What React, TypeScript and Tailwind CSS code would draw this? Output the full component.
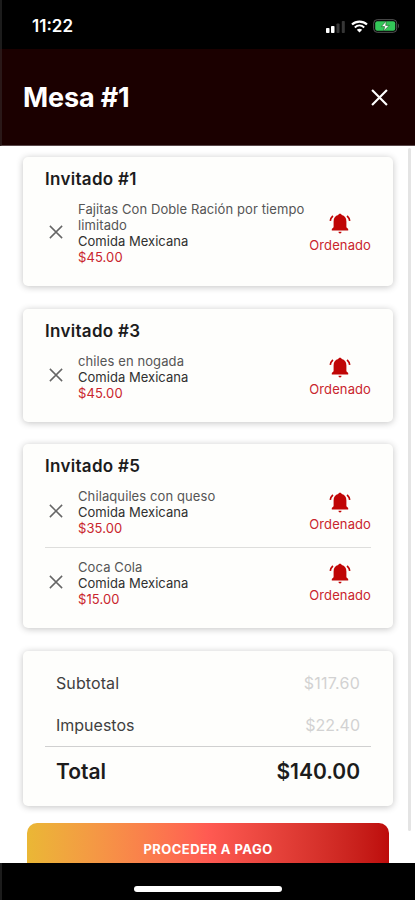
import clsx from "clsx";

type Item = {
  name: string;
  category: string;
  price: string;
};

type Guest = {
  id: number;
  items: Item[];
};

const guests: Guest[] = [
  {
    id: 1,
    items: [
      {
        name: "Fajitas Con Doble Ración por tiempo limitado",
        category: "Comida Mexicana",
        price: "$45.00",
      },
    ],
  },
  {
    id: 3,
    items: [
      { name: "chiles en nogada", category: "Comida Mexicana", price: "$45.00" },
    ],
  },
  {
    id: 5,
    items: [
      { name: "Chilaquiles con queso", category: "Comida Mexicana", price: "$35.00" },
      { name: "Coca Cola", category: "Comida Mexicana", price: "$15.00" },
    ],
  },
];

const cardClass =
  "rounded-[5px] bg-[#fefefc] shadow-[0_1px_7px_rgba(0,0,0,0.24)]";

function CloseIcon({ className }: { className?: string }) {
  return (
    <svg viewBox="0 0 16 16" fill="none" stroke="currentColor" className={className}>
      <path d="M1 1L15 15M15 1L1 15" />
    </svg>
  );
}

function BellIcon() {
  return (
    <svg viewBox="0 0 22 22" className="h-[22px] w-[22px]" fill="#c00505">
      <path d="M11 .8c-.9 0-1.500.5-1.700 1.300C6.200 2.800 4.600 5.200 4.600 8.400V14.200L2.800 16v1.500h16.400V16l-1.800-1.800V8.400c0-3.200-1.600-5.600-4.700-6.300C12.500 1.300 11.900.8 11 .8z" />
      <path d="M9.500 18.800h3c0 1-.6 1.700-1.500 1.700s-1.500-.7-1.500-1.700z" />
      <path
        d="M3.900 2.800C2.400 4.200 1.600 5.800 1.300 7.800M18.100 2.800c1.500 1.400 2.300 3 2.600 5"
        fill="none"
        stroke="#c00505"
        strokeWidth="1.700"
      />
    </svg>
  );
}

function StatusBar() {
  return (
    <div className="flex h-[49px] shrink-0 items-center justify-between border-l-2 border-[#1c1c1c] bg-black pr-[15px] pl-[30px] pt-[3px] text-white">
      <span className="pt-0.5 text-[17px] font-semibold">11:22</span>
      <div className="flex items-center gap-[5px]">
        <svg viewBox="0 0 21 13" className="h-[13px] w-[21px]">
          <rect x="1" y="8" width="3.500" height="5" rx="0.800" fill="#fff" />
          <rect x="6" y="6" width="3.500" height="7" rx="0.800" fill="#fff" />
          <rect x="11.500" y="3.500" width="3" height="9.500" rx="0.800" fill="#363636" />
          <rect x="16.800" y="1" width="3" height="12" rx="0.800" fill="#363636" />
        </svg>
        <svg viewBox="0 0 17 13" className="h-[13px] w-[17px]" fill="none" stroke="#fff">
          <path d="M1 4.500C5.200.6 11.800.6 16 4.500" strokeWidth="2.200" />
          <path d="M3.800 7.400c2.700-2.400 6.700-2.400 9.400 0" strokeWidth="2" />
          <path d="M8.500 12.500L5.800 9.700c1.600-1.400 3.800-1.400 5.400 0z" fill="#fff" stroke="none" />
        </svg>
        <svg viewBox="0 0 27 14" className="h-[14px] w-[27px]">
          <rect x="0.700" y="0.700" width="23" height="12.600" rx="3.500" fill="none" stroke="#555" strokeWidth="1" />
          <rect x="2.200" y="2.200" width="20" height="9.600" rx="2" fill="#34c759" />
          <path d="M25 4.800c1.200.5 1.200 3.900 0 4.400z" fill="#555" />
          <path
            d="M13.300 2L8.300 7.600h3.300L10.700 12l5.500-5.600h-3.500z"
            fill="#fff"
            stroke="#14501f"
            strokeWidth="0.600"
          />
        </svg>
      </div>
    </div>
  );
}

function ItemRow({ item, divided }: { item: Item; divided: boolean }) {
  return (
    <div
      className={clsx(
        "flex items-center",
        divided && "mt-[11px] border-t border-[#dededc] pt-[11px]"
      )}
    >
      <button className="-mt-[3px] ml-1 mr-[15px] shrink-0">
        <CloseIcon className="h-[14px] w-[14px] stroke-[1.7] text-[#666]" />
      </button>
      <div className="w-[232px] text-[13px] leading-4 tracking-[0.1px] text-[#555]">
        <p>{item.name}</p>
        <p className="tracking-[0.03px] text-[#303030]">{item.category}</p>
        <p className="text-[#c9252d]">{item.price}</p>
      </div>
      <div className="ml-auto flex shrink-0 flex-col items-center">
        <BellIcon />
        <span className="mt-0.5 text-[13px] leading-4 tracking-[0.1px] text-[#c9252d]">
          Ordenado
        </span>
      </div>
    </div>
  );
}

function GuestCard({ guest }: { guest: Guest }) {
  return (
    <section className={clsx(cardClass, "px-[22px] pt-3 pb-[21px]")}>
      <h2 className="mb-3 text-[17px] leading-5 font-semibold tracking-[0.3px] text-[#1c1c1c]">
        Invitado #{guest.id}
      </h2>
      {guest.items.map((item, i) => (
        <ItemRow key={item.name} item={item} divided={i > 0} />
      ))}
    </section>
  );
}

function Summary() {
  return (
    <section className={clsx(cardClass, "h-[155px] px-[22px] pt-[11px] text-base text-[#404040]")}>
      <div className="flex h-[42px] items-center justify-between px-[11px]">
        <span className="tracking-[0.1px]">Subtotal</span>
        <span className="tracking-[0.25px] text-[#d2d2d2]">$117.60</span>
      </div>
      <div className="flex h-[42px] items-center justify-between px-[11px]">
        <span>Impuestos</span>
        <span className="text-[#d2d2d2]">$22.40</span>
      </div>
      <div className="flex h-[50px] items-center justify-between border-t border-[#d0d0d0] px-[11px] text-[21px] font-semibold text-[#1c1c1c]">
        <span>Total</span>
        <span>$140.00</span>
      </div>
    </section>
  );
}

export default function App() {
  return (
    <div className="flex h-[900px] w-[415px] flex-col overflow-hidden bg-white font-['Inter',sans-serif]">
      <StatusBar />
      <header className="flex h-[97px] shrink-0 items-center justify-between border-b border-l-2 border-b-[#59484a] border-l-[#2a1818] bg-[#1b0000] pr-[27px] pl-[21px] text-white">
        <h1 className="pt-0.5 text-[27px] font-bold tracking-[-0.15px]">Mesa #1</h1>
        <button>
          <CloseIcon className="h-[17px] w-[17px] stroke-2" />
        </button>
      </header>

      <main className="relative h-[717px] shrink-0 overflow-hidden pt-[11px] pr-[22px] pl-[23px]">
        <div className="flex flex-col gap-[22.6px]">
          {guests.map((guest) => (
            <GuestCard key={guest.id} guest={guest} />
          ))}
          <Summary />
        </div>
        <button className="mt-[17px] ml-1 h-[53px] w-[362px] rounded-[10px] bg-linear-to-r from-[#eab735] via-[#ff5a52] to-[#bd0b0b] text-[13px] font-bold tracking-[0.45px] text-white">
          PROCEDER A PAGO
        </button>
        {/* scroll indicator */}
        <div className="absolute top-0.5 right-1 h-[683px] w-[3px] rounded-full bg-[#e4e4e4]" />
      </main>

      <footer className="flex flex-1 items-end justify-center border-l-2 border-[#1c1c1c] bg-black pr-0.5 pb-2">
        <div className="h-1.5 w-[148px] rounded-full bg-white" />
      </footer>
    </div>
  );
}
